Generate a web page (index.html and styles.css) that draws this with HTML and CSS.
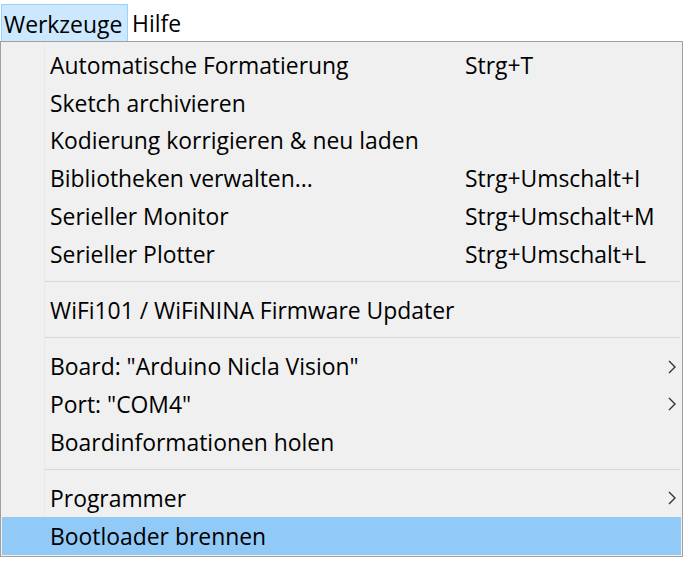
FILE: index.html
```html
<!DOCTYPE html>
<html lang="de">
<head>
<meta charset="utf-8">
<title>Werkzeuge</title>
<link rel="stylesheet" href="styles.css">
</head>
<body>
<div class="menubar">
  <div class="mb-item active">Werkzeuge</div>
  <div class="mb-item">Hilfe</div>
</div>
<div class="menu">
  <div class="row"><span class="label">Automatische Formatierung</span><span class="key">Strg+T</span></div>
  <div class="row"><span class="label">Sketch archivieren</span></div>
  <div class="row"><span class="label">Kodierung korrigieren &amp; neu laden</span></div>
  <div class="row"><span class="label">Bibliotheken verwalten...</span><span class="key">Strg+Umschalt+I</span></div>
  <div class="row"><span class="label">Serieller Monitor</span><span class="key">Strg+Umschalt+M</span></div>
  <div class="row"><span class="label">Serieller Plotter</span><span class="key">Strg+Umschalt+L</span></div>
  <div class="sep"><div class="sep-line"></div></div>
  <div class="row"><span class="label">WiFi101 / WiFiNINA Firmware Updater</span></div>
  <div class="sep"><div class="sep-line"></div></div>
  <div class="row"><span class="label">Board: "Arduino Nicla Vision"</span><svg class="arrow" width="8" height="14" viewBox="0 0 8 14"><polyline points="1,1 7,7 1,13" fill="none" stroke="#333" stroke-width="1.4"/></svg></div>
  <div class="row"><span class="label">Port: "COM4"</span><svg class="arrow" width="8" height="14" viewBox="0 0 8 14"><polyline points="1,1 7,7 1,13" fill="none" stroke="#333" stroke-width="1.4"/></svg></div>
  <div class="row"><span class="label">Boardinformationen holen</span></div>
  <div class="sep"><div class="sep-line"></div></div>
  <div class="row"><span class="label">Programmer</span><svg class="arrow" width="8" height="14" viewBox="0 0 8 14"><polyline points="1,1 7,7 1,13" fill="none" stroke="#333" stroke-width="1.4"/></svg></div>
  <div class="row selected"><span class="label">Bootloader brennen</span></div>
</div>
</body>
</html>
```

FILE: styles.css
```css
html, body {
  margin: 0;
  padding: 0;
  background: #ffffff;
}

body {
  font-family: "Open Sans", "Noto Sans", "DejaVu Sans", sans-serif;
  font-size: 22.9px;
  color: #000000;
}

.menubar {
  display: flex;
  align-items: flex-end;
  height: 41px;
}

.mb-item {
  box-sizing: border-box;
  height: 37px;
  padding-top: 2px;
  line-height: 35px;
  white-space: nowrap;
}

.mb-item.active {
  margin-left: 1px;
  width: 127px;
  padding-left: 2px;
  background: #cce8ff;
  border: 1px solid #99d1ff;
  border-bottom: none;
}

.mb-item + .mb-item {
  padding-left: 4px;
}

.menu {
  box-sizing: border-box;
  width: 683px;
  border: 1px solid #a0a0a0;
  background-color: #f0f0f0;
  background-image: linear-gradient(to right, transparent 43px, #e9e9e9 43px, #e9e9e9 44px, transparent 44px);
  padding: 4.5px 1px 1px 1px;
}

.row {
  display: grid;
  grid-template-columns: 463px 1fr auto;
  align-items: center;
  height: 37.8px;
  white-space: nowrap;
}

.label {
  padding-left: 48px;
}

.key {
  grid-column: 2;
}

.arrow {
  grid-column: 3;
  display: block;
  margin-right: 5px;
}

.row.selected {
  background: #91c9f7;
}

.sep {
  height: 18.3px;
  box-sizing: border-box;
  padding-top: 8px;
}

.sep-line {
  height: 1px;
  margin-left: 43px;
  margin-right: 1px;
  background: #d7d7d7;
}
```
